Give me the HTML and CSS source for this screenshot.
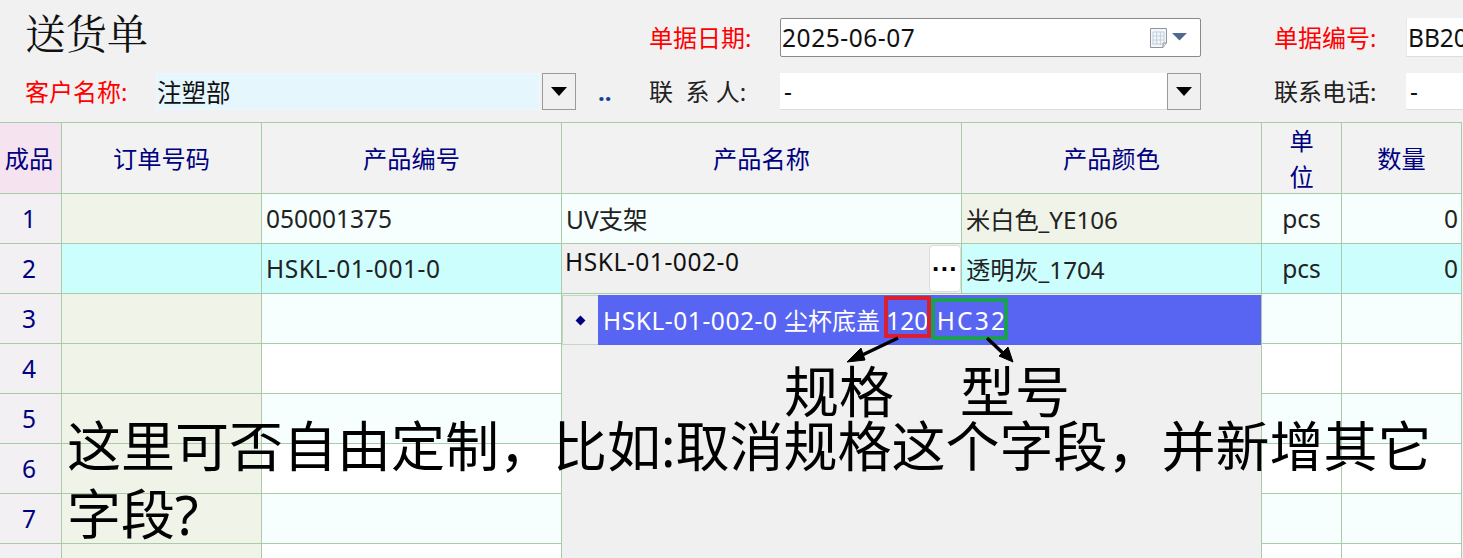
FILE: index.html
```html
<!DOCTYPE html>
<html lang="zh-CN">
<head>
<meta charset="utf-8">
<title>送货单</title>
<link rel="stylesheet" href="styles.css">
</head>
<body>
<main class="page">
  <form class="form">
    <h1 class="title">送货单</h1>
    <label class="label req col-mid">单据日期:</label>
    <div class="field date col-mid-value">
      <span class="value code">2025-06-07</span>
      <svg class="cal" width="40" height="22" viewBox="0 0 40 22" aria-hidden="true">
        <path d="M1.500 1.500H17.500V16L14 20.500H1.500Z" fill="#f4f6f9" stroke="#8f959c"/>
        <path d="M4 5H15M4 9H15M4 13H15M4 17H13M4 5V18M7.700 5V18M11.400 5V18M15 5V15" fill="none" stroke="#c3cfe0"/>
        <path d="M14 20.500V16H17.500" fill="#dfe3e8" stroke="#8f959c"/>
        <path d="M23 6H38L30.500 13.500Z" fill="#4f6a8f"/>
      </svg>
    </div>
    <label class="label req col-end">单据编号:</label>
    <div class="field flat col-end-value"><span class="value">BB2025060700</span></div>

    <label class="label req col-start">客户名称:</label>
    <div class="combo">
      <div class="field customer"><span class="value">注塑部</span></div>
      <button type="button" class="drop"><span class="tri"></span></button>
    </div>
    <span class="dots">..</span>
    <label class="label col-mid">联&nbsp;&nbsp;系&nbsp;人:</label>
    <div class="combo col-mid-value">
      <div class="field plain"><span class="value dash">-</span></div>
      <button type="button" class="drop"><span class="tri"></span></button>
    </div>
    <label class="label col-end">联系电话:</label>
    <div class="field plain col-end-value"><span class="value dash">-</span></div>
  </form>

  <section class="sheet">
    <div class="cell head corner">成品</div>
    <div class="cell head">订单号码</div>
    <div class="cell head">产品编号</div>
    <div class="cell head">产品名称</div>
    <div class="cell head">产品颜色</div>
    <div class="cell head tall">单<br>位</div>
    <div class="cell head">数量</div>

    <div class="cell num">1</div>
    <div class="cell sage"></div>
    <div class="cell text azure">050001375</div>
    <div class="cell text azure">UV支架</div>
    <div class="cell text sage mixed">米白色_YE106</div>
    <div class="cell center azure">pcs</div>
    <div class="cell right azure">0</div>

    <div class="cell num">2</div>
    <div class="cell cyan"></div>
    <div class="cell text cyan code">HSKL-01-001-0</div>
    <div class="cell editor">
      <span class="editor-text code">HSKL-01-002-0</span>
      <button type="button" class="more">···</button>
    </div>
    <div class="cell text cyan mixed">透明灰_1704</div>
    <div class="cell center cyan">pcs</div>
    <div class="cell right cyan">0</div>

    <div class="cell num">3</div><div class="cell sage"></div><div class="cell azure"></div><div class="cell azure"></div><div class="cell azure"></div><div class="cell azure"></div><div class="cell azure"></div>
    <div class="cell num">4</div><div class="cell sage"></div><div class="cell white"></div><div class="cell white"></div><div class="cell white"></div><div class="cell white"></div><div class="cell white"></div>
    <div class="cell num">5</div><div class="cell sage"></div><div class="cell azure"></div><div class="cell azure"></div><div class="cell azure"></div><div class="cell azure"></div><div class="cell azure"></div>
    <div class="cell num">6</div><div class="cell sage"></div><div class="cell white"></div><div class="cell white"></div><div class="cell white"></div><div class="cell white"></div><div class="cell white"></div>
    <div class="cell num">7</div><div class="cell sage"></div><div class="cell azure"></div><div class="cell azure"></div><div class="cell azure"></div><div class="cell azure"></div><div class="cell azure"></div>
    <div class="cell num"></div><div class="cell sage"></div><div class="cell white"></div><div class="cell white"></div><div class="cell white"></div><div class="cell white"></div><div class="cell white"></div>

    <div class="popup">
      <div class="popup-row">
        <span class="marker"><span class="diamond"></span></span>
        <span class="option"><span class="code">HSKL-01-002-0</span> <span class="desc">尘杯底盖</span> 120 <span class="model">HC32</span></span>
      </div>
    </div>
  </section>

  <svg class="marks" width="1463" height="558" viewBox="0 0 1463 558" aria-hidden="true">
    <rect x="886" y="298" width="43" height="38" fill="none" stroke="#dc1f30" stroke-width="4"/>
    <rect x="933" y="300" width="73" height="38" fill="none" stroke="#1c9e55" stroke-width="4"/>
    <path d="M898 338L856 358" stroke="#000" stroke-width="3.500" fill="none"/>
    <path d="M847 362L861 348L865 360Z" fill="#000" stroke="#000"/>
    <path d="M987 338L1006 356" stroke="#000" stroke-width="3.500" fill="none"/>
    <path d="M1013 362L1008 347L999 356Z" fill="#000" stroke="#000"/>
  </svg>
  <span class="note note-spec">规格</span>
  <span class="note note-model">型号</span>
  <p class="question">这里可否自由定制，比如:取消规格这个字段，并新增其它<br>字段?</p>
</main>
</body>
</html>
```
FILE: styles.css
```css
* { box-sizing: border-box; }
html, body { margin: 0; height: 100%; overflow: hidden; }
body {
  background: #f1f1f1;
  color: #222;
  font-family: "Noto Sans", "Noto Sans CJK SC", sans-serif;
  font-size: 24.5px;
}
.page { position: relative; width: 1463px; height: 558px; overflow: hidden; }
.code { letter-spacing: 0.55px; }
.mixed { font-size: 24.2px; }

.form {
  display: grid;
  grid-template-columns: 131px 420px 73px 131px 421px 73px 132px 57px;
  grid-template-rows: 39px 37px;
  row-gap: 16px;
  height: 122px;
  padding: 18px 0 0 25px;
  align-items: center;
}
.title {
  grid-column: 1 / span 3;
  margin: -12px 0 0;
  color: #111;
  font-family: "Noto Serif CJK SC", "Liberation Serif", "Noto Sans CJK SC", serif;
  font-size: 41px;
  font-weight: 400;
  line-height: 40px;
}
.col-start { grid-column: 1; }
.col-mid { grid-column: 4; }
.col-mid-value { grid-column: 5; }
.col-end { grid-column: 7; }
.col-end-value { grid-column: 8; }
.label { font-size: 24px; line-height: 30px; white-space: nowrap; color: #222; }
.form .req { color: #f00; }
.field {
  display: flex;
  align-items: center;
  height: 100%;
  background: #fff;
  border-bottom: 1px solid #ddd;
  overflow: hidden;
  white-space: nowrap;
}
.value { padding-left: 1px; color: #111; }
.dash { padding-left: 4px; }
.date { justify-content: space-between; border: 1px solid #8a8a8a; border-radius: 2px; }
.cal { margin-right: 11px; }
.flat { border-left: 1px solid #e8e8e8; }
.combo { display: flex; height: 100%; }
.customer { flex: 1; background: #e6f6fd; border: 1px solid #eef7fb; margin-right: 2px; }
.customer .value { padding-left: 0; }
.plain { flex: 1; }
.drop {
  display: flex;
  align-items: center;
  justify-content: center;
  flex: none;
  width: 34px;
  height: 100%;
  padding: 0;
  background: #f0f0f0;
  border: 1px solid #9a9a9a;
}
.tri {
  width: 0;
  height: 0;
  border-left: 8px solid transparent;
  border-right: 8px solid transparent;
  border-top: 9px solid #000;
}
.dots {
  padding-left: 22px;
  color: #0f3fa0;
  font-weight: 700;
  line-height: 30px;
  font-size: 24px;
}

.sheet {
  position: relative;
  display: grid;
  grid-template-columns: 62px 200px 300px 400px 300px 80px 120px;
  grid-template-rows: 72px repeat(8, 50px);
  width: 1462px;
}
.cell {
  display: flex;
  align-items: center;
  min-width: 0;
  border-right: 1px solid #a8cba8;
  border-bottom: 1px solid #a8cba8;
  white-space: nowrap;
  color: #222;
}
.head {
  justify-content: center;
  padding-bottom: 1px;
  background: #f2f2f2;
  border-top: 1px solid #a8cba8;
  color: #000080;
  font-size: 24.2px;
}
.corner { background: #f5e4f0; padding-right: 3px; }
.tall { text-align: center; line-height: 36px; padding: 1px 0 0; }
.num { justify-content: center; padding-right: 3px; background: #f2f0f2; color: #000080; }
.text { padding-left: 4px; }
.center { justify-content: center; }
.right { justify-content: flex-end; padding-right: 3px; }
.azure { background: #f6fffd; }
.white { background: #fff; }
.sage { background: #eff3e8; }
.cyan { background: #ccfefe; }
.editor {
  align-items: flex-start;
  justify-content: space-between;
  background: #f0f0f0;
  padding: 1px 0 1px 3px;
}
.editor-text { line-height: 34px; color: #111; }
.more {
  align-self: stretch;
  width: 32px;
  padding: 0;
  background: #fff;
  border: 1px solid #ddd;
  border-radius: 4px;
  color: #000;
  font-family: "Liberation Sans", sans-serif;
  font-size: 26px;
  font-weight: 700;
  line-height: 1;
}
.popup {
  position: absolute;
  left: 562px;
  top: 172px;
  width: 699px;
  height: 264px;
  background: #f0f0f0;
}
.popup-row { display: flex; height: 51px; padding-top: 1px; }
.marker {
  display: flex;
  align-items: center;
  justify-content: center;
  flex: none;
  width: 36px;
  border: 1px solid #c4d6c4;
  border-right: 0;
  background: #f0f0f0;
}
.diamond { width: 7px; height: 7px; background: #000080; transform: rotate(45deg); }
.option {
  flex: 1;
  padding-left: 5px;
  background: #5865f2;
  color: #fff;
  line-height: 51px;
  white-space: pre;
}
.desc { font-size: 24px; }
.model { margin-left: 2px; letter-spacing: 2.200px; }

.marks { position: absolute; left: 0; top: 0; pointer-events: none; }
.note, .question {
  position: absolute;
  margin: 0;
  color: #000;
  white-space: nowrap;
}
.note { top: 367px; font-size: 55px; line-height: 48px; }
.note-spec { left: 784px; }
.note-model { left: 960px; }
.question { left: 67px; top: 412px; font-size: 54px; line-height: 68px; }
```
